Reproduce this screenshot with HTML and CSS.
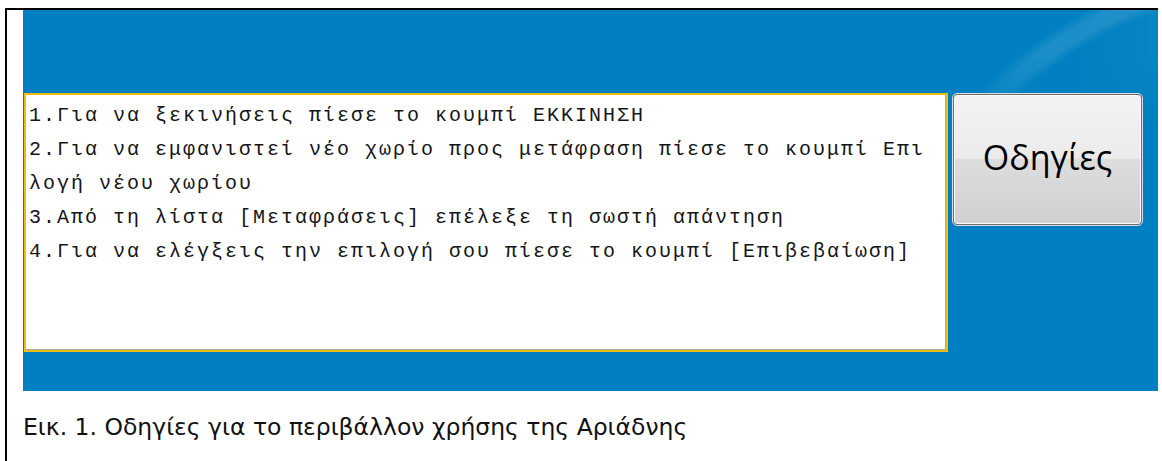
FILE: index.html
```html
<!DOCTYPE html>
<html lang="el">
<head>
<meta charset="utf-8">
<title>Αριάδνη – Οδηγίες</title>
<link rel="stylesheet" href="styles.css">
</head>
<body>
  <figure class="frame">
    <div class="app-window">
      <div class="instructions">1.Για να ξεκινήσεις πίεσε το κουμπί ΕΚΚΙΝΗΣΗ
2.Για να εμφανιστεί νέο χωρίο προς μετάφραση πίεσε το κουμπί Επι
λογή νέου χωρίου
3.Από τη λίστα [Μεταφράσεις] επέλεξε τη σωστή απάντηση
4.Για να ελέγξεις την επιλογή σου πίεσε το κουμπί [Επιβεβαίωση]</div>
      <button class="help-button" type="button">Οδηγίες</button>
    </div>
    <figcaption class="caption">Εικ. 1. Οδηγίες για το περιβάλλον χρήσης της Αριάδνης</figcaption>
  </figure>
</body>
</html>
```

FILE: styles.css
```css
html, body {
  margin: 0;
  padding: 0;
  background: #ffffff;
}

.frame {
  margin: 8px 0 0 5px;
  width: 1153px;
  height: 453px;
  box-sizing: border-box;
  border-top: 2px solid #000000;
  border-left: 2px solid #000000;
  padding-left: 16px;
}

/* blue application surface */
.app-window {
  position: relative;
  display: flex;
  align-items: flex-start;
  gap: 5px;
  height: 381px;
  box-sizing: border-box;
  padding: 83px 0 0 1px;
  background-color: #0080c2;
}

/* faint glass streak in the top right corner of the window */
.app-window::before {
  content: "";
  position: absolute;
  top: 0;
  right: 0;
  width: 280px;
  height: 115px;
  background:
    radial-gradient(circle at 422px 390px,
      rgba(255, 255, 255, 0) 414px,
      rgba(255, 255, 255, 0.11) 423px,
      rgba(255, 255, 255, 0.11) 434px,
      rgba(255, 255, 255, 0) 445px),
    linear-gradient(90deg, rgba(255, 255, 255, 0) 70%, rgba(255, 255, 255, 0.04) 100%);
  -webkit-mask-image: linear-gradient(180deg, #000 40%, transparent 100%);
  mask-image: linear-gradient(180deg, #000 40%, transparent 100%);
}

.instructions {
  position: relative;
  width: 924px;
  height: 259px;
  box-sizing: border-box;
  flex: none;
  background: #ffffff;
  border: 2px solid #ecbd12;
  box-shadow: inset -1px -1px 0 #a8a8a8;
  padding: 4px 4px 0 3px;
  font-family: "Liberation Mono", "Courier New", monospace;
  font-size: 20px;
  letter-spacing: 2px;
  line-height: 34px;
  color: #161616;
  white-space: pre;
  overflow: hidden;
}

.help-button {
  position: relative;
  flex: none;
  margin-top: 1px;
  width: 189px;
  height: 131px;
  box-sizing: border-box;
  border: 1px solid #707070;
  border-radius: 4px;
  outline: 1px solid #d8dde2;
  box-shadow: inset 0 0 0 1px #fbfbfb;
  background: linear-gradient(180deg, #f3f3f3 0%, #ebebeb 49%, #dddddd 50%, #d0d0d0 100%);
  font-family: "Open Sans", "DejaVu Sans", sans-serif;
  font-size: 34px;
  color: #000000;
  padding: 0 0 6px;
  cursor: pointer;
}

.caption {
  margin: 0;
  padding: 22px 0 0 0;
  font-family: "DejaVu Sans", Verdana, sans-serif;
  font-size: 23.5px;
  line-height: 28px;
  color: #111111;
}
```
